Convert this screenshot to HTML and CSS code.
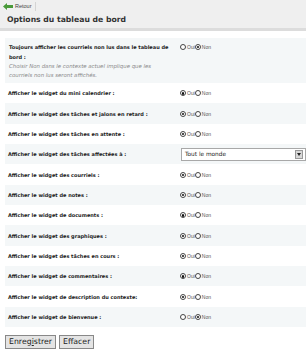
FILE: index.html
```html
<!DOCTYPE html>
<html lang="fr">
<head>
    <meta charset="UTF-8">
    <title>Options du tableau de bord</title>
    <link rel="stylesheet" href="styles.css">
</head>
<body>
    <div class="header">
        <div class="nav">
            <a class="back" href="#">
                <svg class="arrow" width="10" height="7" viewBox="0 0 10 7">
                    <path d="M0 3.5 L4 0 L4 2 L10 2 L10 5 L4 5 L4 7 Z" fill="#4a9a3a"/>
                </svg>
                Retour
            </a>
            <span class="sep"></span>
        </div>
        <h1>Options du tableau de bord</h1>
    </div>

    <form class="options">
        <div class="row odd first">
            <div class="label">
                <strong>Toujours afficher les courriels non lus dans le tableau de bord :</strong>
                <p class="desc">Choisir Non dans le contexte actuel implique que les courriels non lus seront affichés.</p>
            </div>
            <div class="field">
                <label><input type="radio" name="r0">Oui</label>
                <label><input type="radio" name="r0" checked>Non</label>
            </div>
        </div>
        <div class="row">
            <div class="label"><strong>Afficher le widget du mini calendrier :</strong></div>
            <div class="field">
                <label><input type="radio" name="r1" checked>Oui</label>
                <label><input type="radio" name="r1">Non</label>
            </div>
        </div>
        <div class="row odd">
            <div class="label"><strong>Afficher le widget des tâches et jalons en retard :</strong></div>
            <div class="field">
                <label><input type="radio" name="r2" checked>Oui</label>
                <label><input type="radio" name="r2">Non</label>
            </div>
        </div>
        <div class="row">
            <div class="label"><strong>Afficher le widget des tâches en attente :</strong></div>
            <div class="field">
                <label><input type="radio" name="r3" checked>Oui</label>
                <label><input type="radio" name="r3">Non</label>
            </div>
        </div>
        <div class="row odd">
            <div class="label"><strong>Afficher le widget des tâches affectées à :</strong></div>
            <div class="field">
                <div class="select">
                    <span>Tout le monde</span>
                    <span class="drop"></span>
                </div>
            </div>
        </div>
        <div class="row">
            <div class="label"><strong>Afficher le widget des courriels :</strong></div>
            <div class="field">
                <label><input type="radio" name="r5" checked>Oui</label>
                <label><input type="radio" name="r5">Non</label>
            </div>
        </div>
        <div class="row odd">
            <div class="label"><strong>Afficher le widget de notes :</strong></div>
            <div class="field">
                <label><input type="radio" name="r6" checked>Oui</label>
                <label><input type="radio" name="r6">Non</label>
            </div>
        </div>
        <div class="row">
            <div class="label"><strong>Afficher le widget de documents :</strong></div>
            <div class="field">
                <label><input type="radio" name="r7" checked>Oui</label>
                <label><input type="radio" name="r7">Non</label>
            </div>
        </div>
        <div class="row odd">
            <div class="label"><strong>Afficher le widget des graphiques :</strong></div>
            <div class="field">
                <label><input type="radio" name="r8" checked>Oui</label>
                <label><input type="radio" name="r8">Non</label>
            </div>
        </div>
        <div class="row">
            <div class="label"><strong>Afficher le widget des tâches en cours :</strong></div>
            <div class="field">
                <label><input type="radio" name="r9" checked>Oui</label>
                <label><input type="radio" name="r9">Non</label>
            </div>
        </div>
        <div class="row odd">
            <div class="label"><strong>Afficher le widget de commentaires :</strong></div>
            <div class="field">
                <label><input type="radio" name="r10" checked>Oui</label>
                <label><input type="radio" name="r10">Non</label>
            </div>
        </div>
        <div class="row">
            <div class="label"><strong>Afficher le widget de description du contexte:</strong></div>
            <div class="field">
                <label><input type="radio" name="r11" checked>Oui</label>
                <label><input type="radio" name="r11">Non</label>
            </div>
        </div>
        <div class="row odd">
            <div class="label"><strong>Afficher le widget de bienvenue :</strong></div>
            <div class="field">
                <label><input type="radio" name="r12">Oui</label>
                <label><input type="radio" name="r12" checked>Non</label>
            </div>
        </div>

        <div class="buttons">
            <button type="button" class="btn">Enreg<u>i</u>strer</button>
            <button type="button" class="btn">Effacer</button>
        </div>
    </form>
</body>
</html>
```

FILE: styles.css
```css
html{
    background: #fff;
}
body{
    margin: 0;
    padding: 0;
    font-family: "DejaVu Sans", Verdana, sans-serif;
    color: #222;
}

/* top bar */
.header{
    background: #efefef;
    border-bottom: 3px solid #dcdcdc;
    height: 28px;
}
.nav{
    display: flex;
    align-items: center;
    height: 12px;
    padding-left: 3px;
}
.back{
    display: flex;
    align-items: center;
    gap: 2px;
    font-family: "Liberation Sans", Arial, sans-serif;
    font-size: 5.5px;
    color: #444;
    text-decoration: none;
}
.sep{
    width: 1px;
    height: 9px;
    background: #d4d4d4;
    margin-left: 3px;
}
h1{
    margin: 0;
    padding: 2px 0 0 7px;
    font-size: 7.7px;
    font-weight: bold;
    color: #333;
    line-height: 12px;
}

/* option rows */
.options{
    margin: 7px 0 0 5px;
}
.row{
    display: flex;
    align-items: center;
    height: 20.35px;
}
.row.odd{
    background: #f4f7f8;
}
.row.first{
    height: auto;
    align-items: flex-start;
    padding: 4px 0 3px;
}
.label{
    width: 172px;
    padding-left: 3px;
    font-size: 5px;
    line-height: 10px;
}
.label strong{
    font-weight: bold;
    color: #222;
}
.first .label{
    padding-left: 4px;
    width: 171px;
}
.desc{
    margin: 0;
    max-width: 150px;
    font-style: italic;
    color: #888;
    font-size: 5.4px;
    line-height: 9px;
}
.field{
    display: flex;
    align-items: center;
    font-family: "Liberation Sans", Arial, sans-serif;
    font-size: 5px;
    color: #555;
}
.first .field{
    margin-top: 2px;
}
.field label{
    display: flex;
    align-items: center;
}
.field input{
    appearance: none;
    -webkit-appearance: none;
    width: 6px;
    height: 6px;
    margin: 0 1px 0 0;
    border: 0.7px solid #444;
    border-radius: 50%;
    background: #fff;
    position: relative;
}
.field input:checked::after{
    content: "";
    position: absolute;
    left: 1.2px;
    top: 1.2px;
    width: 2.2px;
    height: 2.2px;
    border-radius: 50%;
    background: #111;
}

.select{
    display: flex;
    align-items: center;
    justify-content: space-between;
    width: 120px;
    height: 11px;
    margin-left: 1px;
    border: 1px solid #a8a8a8;
    background: #fff;
    font-family: "DejaVu Sans", Verdana, sans-serif;
    font-size: 5.8px;
    color: #222;
    padding-left: 3px;
}
.drop{
    width: 6px;
    height: 7px;
    margin-right: 2px;
    background: #d8d8d8;
    border: 1px solid #999;
    position: relative;
}
.drop::after{
    content: "";
    position: absolute;
    left: 1px;
    top: 2px;
    border-left: 2px solid transparent;
    border-right: 2px solid transparent;
    border-top: 3px solid #222;
}

/* buttons */
.buttons{
    display: flex;
    gap: 3px;
    margin-top: 8px;
}
.btn{
    font-family: "DejaVu Sans", Verdana, sans-serif;
    font-size: 7.8px;
    color: #222;
    background: #e4e4e4;
    border: 1px solid #888;
    padding: 1px 3px;
    height: 14px;
    line-height: 10px;
}
```
